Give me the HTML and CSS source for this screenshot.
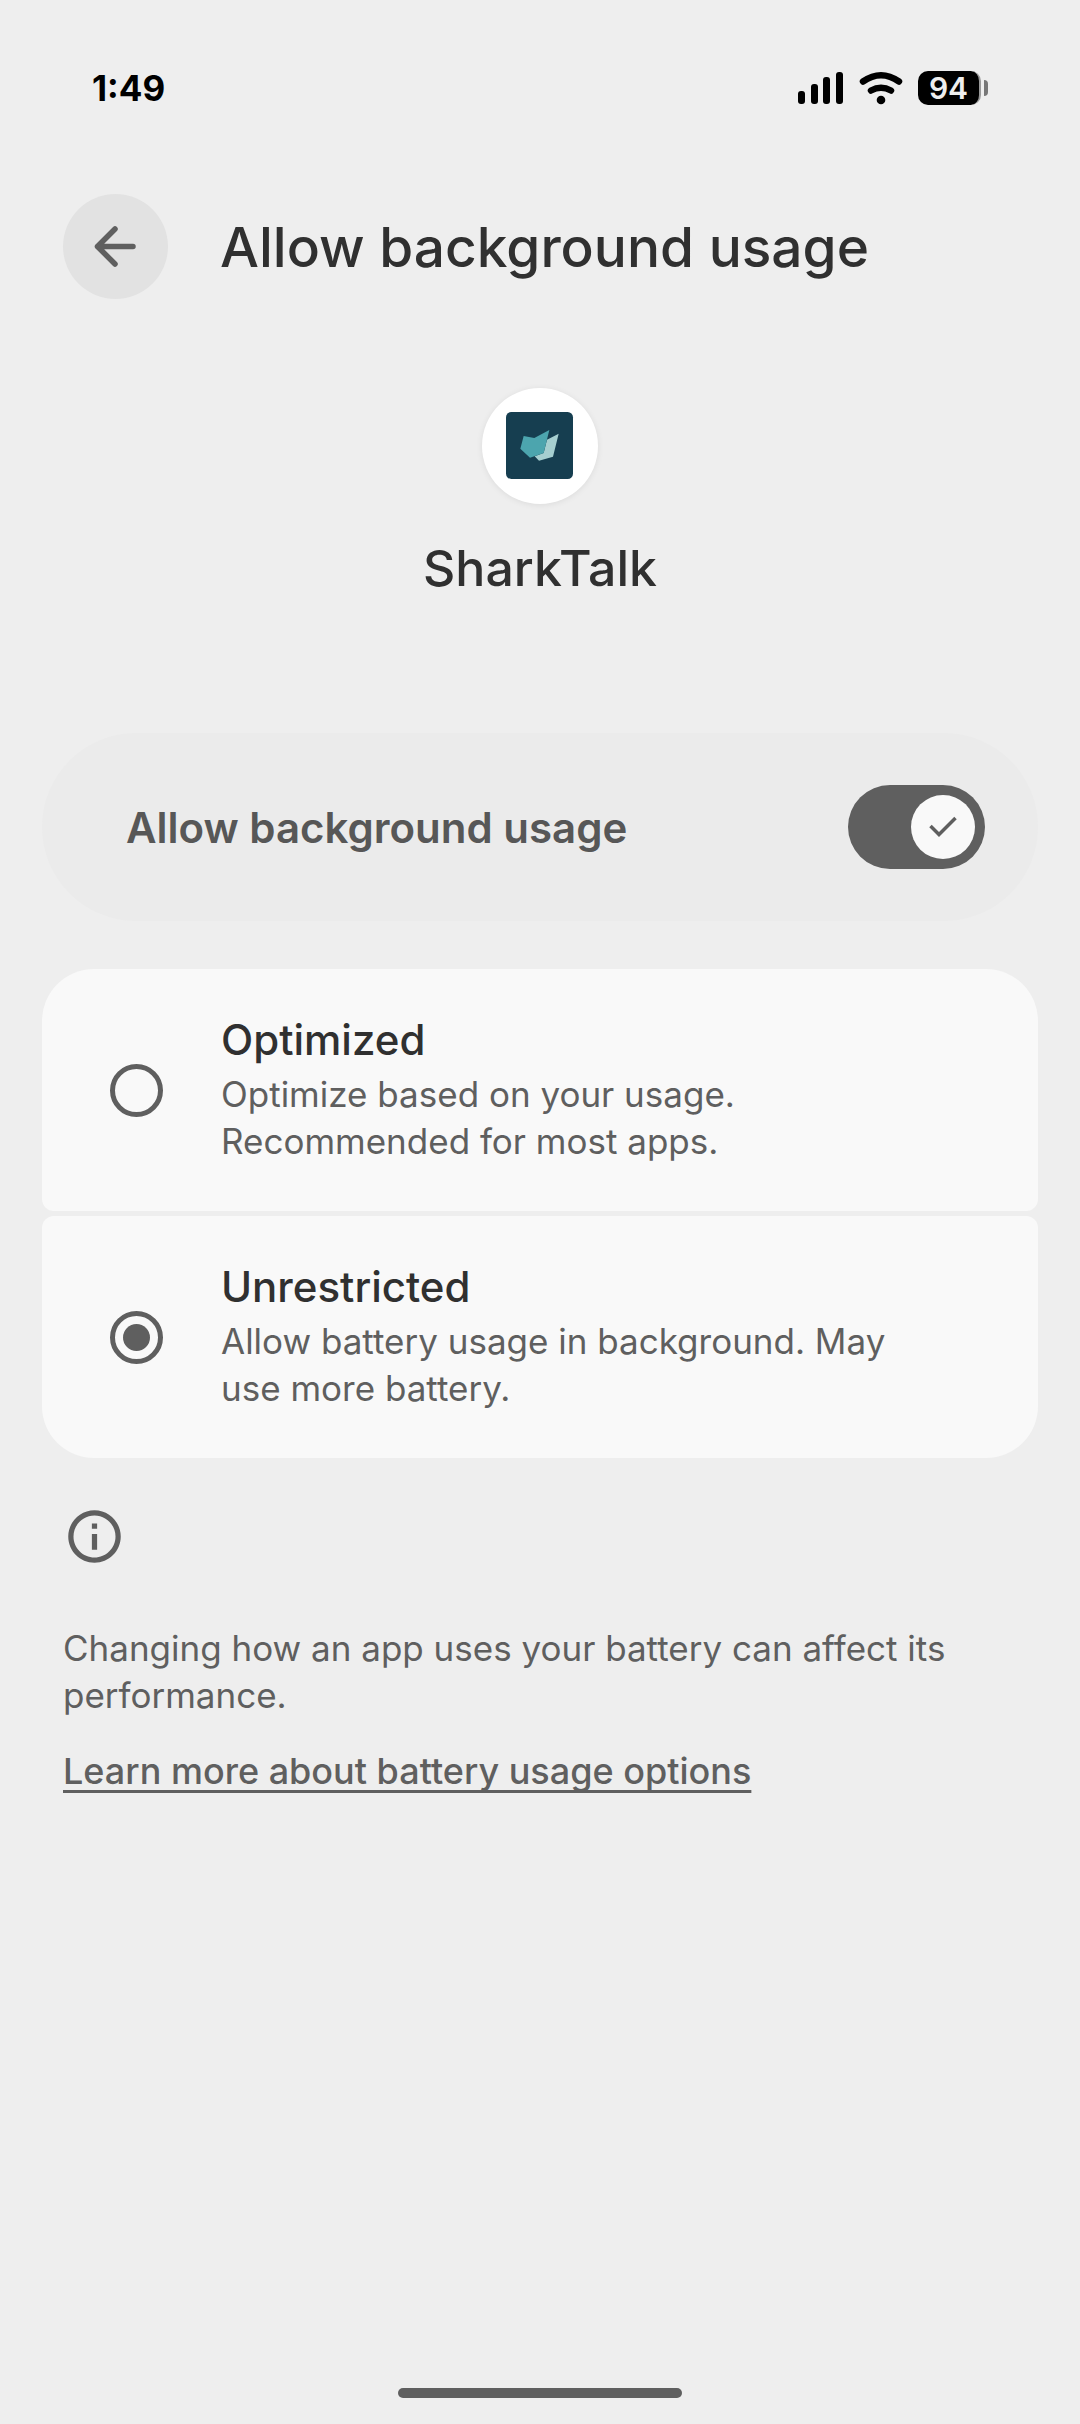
FILE: index.html
```html
<!DOCTYPE html>
<html lang="en">
<head>
  <meta charset="UTF-8">
  <meta name="viewport" content="width=device-width, initial-scale=1.0">
  <title>Allow background usage</title>
  <link rel="stylesheet" href="styles.css">
</head>
<body>
  <div class="status-bar">
    <span class="time">1:49</span>
    <div class="status-icons">
      <svg width="46" height="34" viewBox="0 0 46 34">
        <rect x="0" y="20" width="7" height="13" rx="3"/>
        <rect x="13" y="13" width="7" height="20" rx="3"/>
        <rect x="25" y="6" width="7" height="27" rx="3"/>
        <rect x="38" y="1" width="7" height="32" rx="3"/>
      </svg>
      <svg width="44" height="34" viewBox="0 0 44 34">
        <path d="M4 10.5Q22-2 40 10.5M12 19.5Q22 14 32 19.5" fill="none" stroke="#000" stroke-width="6.5" stroke-linecap="round"/>
        <circle cx="22" cy="29" r="4.3"/>
      </svg>
      <div class="battery">
        <span class="battery-level">94</span>
        <span class="battery-tip"></span>
      </div>
    </div>
  </div>

  <header class="top-bar">
    <button class="back" type="button" aria-label="Back">
      <svg width="44" height="44" viewBox="0 0 44 44">
        <path d="M21 4L3.5 21.5L21 39M3.5 21.5H39" fill="none" stroke="#5f5f5f" stroke-width="5.5" stroke-linecap="round" stroke-linejoin="round"/>
      </svg>
    </button>
    <h1>Allow background usage</h1>
  </header>

  <main>
    <section class="app">
      <div class="app-icon">
        <svg width="68" height="68" viewBox="0 0 204 204">
          <rect width="201" height="201" rx="16" fill="#163e50"/>
          <path d="M158 65L141 134L99 146L86 133L113 123L123 83Z" fill="#a6cfd0"/>
          <path d="M53 72L85 78L130 54L113 123L72 137L43 110Z" fill="#4ca5ae"/>
        </svg>
      </div>
      <h2>SharkTalk</h2>
    </section>

    <label class="main-switch">
      <span class="switch-label">Allow background usage</span>
      <span class="switch">
        <input type="checkbox" role="switch" checked>
        <span class="thumb">
          <svg width="28" height="22" viewBox="0 0 28 22">
            <path d="M1.500 10L10 18.500L26.500 2" fill="none" stroke="#5f5f5f" stroke-width="3.500"/>
          </svg>
        </span>
      </span>
    </label>

    <div class="options">
      <label class="option">
        <input type="radio" name="usage">
        <span class="option-text">
          <span class="option-title">Optimized</span>
          <span class="option-desc">Optimize based on your usage.<br>Recommended for most apps.</span>
        </span>
      </label>
      <label class="option">
        <input type="radio" name="usage" checked>
        <span class="option-text">
          <span class="option-title">Unrestricted</span>
          <span class="option-desc">Allow battery usage in background. May<br>use more battery.</span>
        </span>
      </label>
    </div>

    <footer class="info">
      <svg width="63" height="63" viewBox="0 0 24 24" fill="#5f5f5f">
        <path d="M11 7h2v2h-2zm0 4h2v6h-2zm1-9C6.480 2 2 6.480 2 12s4.480 10 10 10 10-4.480 10-10S17.520 2 12 2zm0 18c-4.410 0-8-3.590-8-8s3.590-8 8-8 8 3.590 8 8-3.590 8-8 8z"/>
      </svg>
      <p>Changing how an app uses your battery can affect its<br>performance.</p>
      <a href="#">Learn more about battery usage options</a>
    </footer>
  </main>

  <div class="home-bar"></div>
</body>
</html>
```

FILE: styles.css
```css
* {
  box-sizing: border-box;
}
body {
  margin: 0;
  min-height: 100vh;
  display: flex;
  flex-direction: column;
  background: #eeeeee;
  color: #303030;
  font-family: Inter, Roboto, sans-serif;
}
h1, h2, p {
  margin: 0;
  font-weight: 500;
}
.status-bar {
  display: flex;
  justify-content: space-between;
  align-items: center;
  padding: 64px 92px 0;
  height: 112px;
  color: #000;
}
.time {
  font-size: 35px;
  font-weight: 700;
}
.status-icons {
  display: flex;
  align-items: center;
  gap: 15px;
}
.battery {
  display: flex;
  align-items: center;
  gap: 3px;
}
.battery-level {
  width: 63px;
  height: 34px;
  border-radius: 10px;
  border-right: 2px solid #999;
  background: #000;
  color: #eee;
  font-size: 30px;
  font-weight: 600;
  line-height: 34px;
  text-align: center;
}
.battery-tip {
  width: 4px;
  height: 16px;
  border-radius: 0 4px 4px 0;
  background: #777;
}
.top-bar {
  display: flex;
  align-items: center;
  gap: 52px;
  padding: 82px 63px 0;
}
.back {
  width: 105px;
  height: 105px;
  padding: 0;
  border: 0;
  border-radius: 50%;
  background: #e2e2e2;
  display: flex;
  align-items: center;
  justify-content: center;
}
h1 {
  font-size: 55px;
}
main {
  padding: 0 42px;
}
.app {
  display: flex;
  flex-direction: column;
  align-items: center;
  padding-top: 89px;
}
.app-icon {
  width: 116px;
  height: 116px;
  border-radius: 50%;
  background: #fff;
  box-shadow: 0 1px 6px rgba(0, 0, 0, 0.08);
  display: flex;
  align-items: center;
  justify-content: center;
}
h2 {
  margin-top: 32px;
  font-size: 50px;
  line-height: 64px;
}
.main-switch {
  display: flex;
  align-items: center;
  justify-content: space-between;
  height: 188px;
  margin-top: 133px;
  padding: 0 53px 0 84px;
  border-radius: 95px;
  background: #ebebeb;
}
.switch-label {
  color: #575757;
  font-size: 42px;
  font-weight: 600;
}
.switch {
  display: grid;
  align-items: center;
}
.switch input {
  grid-area: 1 / 1;
  appearance: none;
  width: 137px;
  height: 84px;
  margin: 0;
  border-radius: 42px;
  background: #5f5f5f;
}
.thumb {
  grid-area: 1 / 1;
  justify-self: end;
  width: 64px;
  height: 64px;
  margin-right: 10px;
  border-radius: 50%;
  background: #f9f9f9;
  display: flex;
  align-items: center;
  justify-content: center;
}
.options {
  display: flex;
  flex-direction: column;
  gap: 5px;
  margin-top: 48px;
}
.option {
  display: flex;
  align-items: center;
  gap: 58px;
  padding: 42px 68px;
  height: 242px;
  background: #f9f9f9;
  border-radius: 12px;
}
.option:first-child {
  border-top-left-radius: 52px;
  border-top-right-radius: 52px;
}
.option:last-child {
  border-bottom-left-radius: 52px;
  border-bottom-right-radius: 52px;
}
.option input {
  appearance: none;
  display: grid;
  place-items: center;
  flex: none;
  width: 53px;
  height: 53px;
  margin: 0;
  border: 5px solid #5f5f5f;
  border-radius: 50%;
}
.option input:checked::before {
  content: "";
  width: 27px;
  height: 27px;
  border-radius: 50%;
  background: #5f5f5f;
}
.option-text {
  display: flex;
  flex-direction: column;
  gap: 6px;
}
.option-title {
  font-size: 42px;
  font-weight: 500;
  line-height: 50px;
}
.option-desc {
  color: #5f5f5f;
  font-size: 35px;
  line-height: 47px;
}
.info {
  display: flex;
  flex-direction: column;
  align-items: flex-start;
  padding: 47px 21px 0;
  color: #5f5f5f;
  font-size: 35px;
  line-height: 47px;
}
.info p {
  margin-top: 57px;
  font-weight: 400;
}
.info a {
  margin-top: 29px;
  color: inherit;
  font-size: 36px;
  font-weight: 500;
  text-decoration-thickness: 3px;
  text-underline-offset: 6px;
  text-decoration-skip-ink: none;
}
.home-bar {
  width: 284px;
  height: 10px;
  margin: auto auto 26px;
  border-radius: 5px;
  background: #5f5f5f;
}
```
